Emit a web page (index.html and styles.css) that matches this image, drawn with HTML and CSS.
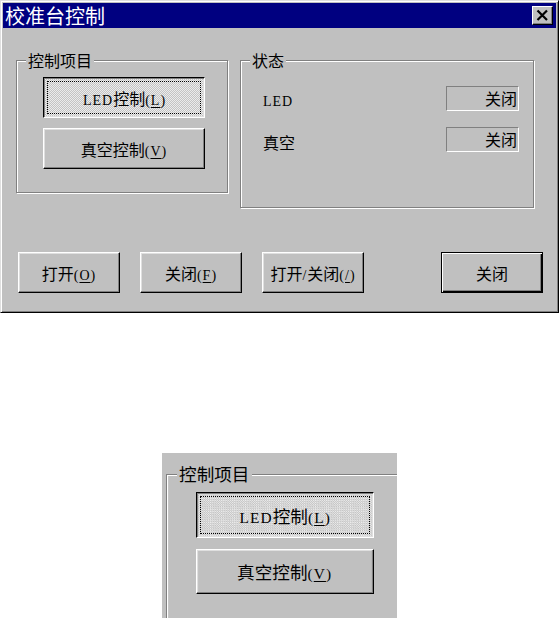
FILE: index.html
```html
<!DOCTYPE html>
<html lang="zh-CN">
<head>
<meta charset="utf-8">
<title>校准台控制</title>
<link rel="stylesheet" href="styles.css">
</head>
<body>
<div class="window">
  <div class="titlebar">
    <span class="title">校准台控制</span>
    <span class="close-btn"><svg width="21" height="19" viewBox="0 0 21 19"><path d="M5.5 4.5 L15 14 M15 4.5 L5.5 14" stroke="#000" stroke-width="2.2" fill="none"/></svg></span>
  </div>
  <div class="client">
    <div class="groups">
      <div class="group group-ctrl">
        <span class="legend">控制项目</span>
        <div class="btn btn-pressed"><span><span class="l">LED</span>控制<span class="l">(<u>L</u>)</span></span></div>
        <div class="btn btn-big"><span>真空控制<span class="l">(<u>V</u>)</span></span></div>
      </div>
      <div class="group group-state">
        <span class="legend">状态</span>
        <div class="state-row"><span class="l lbl">LED</span><span class="field">关闭</span></div>
        <div class="state-row"><span class="lbl">真空</span><span class="field">关闭</span></div>
      </div>
    </div>
    <div class="actions">
      <div class="btn btn-act"><span>打开<span class="l">(<u>O</u>)</span></span></div>
      <div class="btn btn-act"><span>关闭<span class="l">(<u>F</u>)</span></span></div>
      <div class="btn btn-act"><span>打开<span class="l">/</span>关闭<span class="l">(<u>/</u>)</span></span></div>
      <div class="btn btn-act btn-default"><span>关闭</span></div>
    </div>
  </div>
</div>

<div class="crop">
  <div class="crop-inner">
    <div class="group group-ctrl">
      <span class="legend">控制项目</span>
      <div class="btn btn-pressed"><span><span class="l">LED</span>控制<span class="l">(<u>L</u>)</span></span></div>
      <div class="btn btn-big"><span>真空控制<span class="l">(<u>V</u>)</span></span></div>
    </div>
  </div>
</div>
</body>
</html>
```
FILE: styles.css
```css
html, body {
  margin: 0;
  padding: 0;
  background: #ffffff;
}
body {
  font-family: "Noto Sans CJK SC", "Noto Sans", sans-serif;
  font-size: 16px;
  color: #000;
}
.l {
  font-family: "Liberation Serif", "DejaVu Serif", serif;
  font-size: 14px;
  letter-spacing: 1px;
}
u {
  text-decoration-thickness: 1px;
  text-underline-offset: 2px;
}
.window {
  box-sizing: border-box;
  width: 559px;
  height: 313px;
  border: 1px solid;
  border-color: #dfdfdf #000 #000 #dfdfdf;
  box-shadow: inset 1px 1px #fff, inset -1px -1px #808080;
  padding: 2px;
  background: #c0c0c0;
}
.titlebar {
  height: 25px;
  background: #000080;
  color: #fff;
  display: flex;
  align-items: center;
  justify-content: space-between;
  padding: 0 3px 0 2px;
}
.title {
  font-size: 20px;
  line-height: 25px;
}
.close-btn {
  display: block;
  width: 21px;
  height: 19px;
  box-sizing: border-box;
  background: #c0c0c0;
  border: 1px solid;
  border-color: #fff #000 #000 #fff;
  box-shadow: inset -1px -1px #808080;
}
.close-btn svg {
  display: block;
  margin: -1px;
}
.client {
  padding: 32px 0 0 13px;
}
.groups {
  display: flex;
  align-items: flex-start;
  gap: 12px;
}
.group {
  position: relative;
  box-sizing: border-box;
  border: 1px solid #808080;
  box-shadow: inset 1px 1px #fff, 1px 1px #fff;
}
.legend {
  position: absolute;
  top: -11px;
  left: 9px;
  padding: 0 2px;
  background: #c0c0c0;
  line-height: 20px;
  font-size: 16px;
}
.group-ctrl {
  width: 212px;
  height: 133px;
  padding: 16px 0 0 26px;
  display: flex;
  flex-direction: column;
  gap: 10px;
}
.group-state {
  width: 294px;
  height: 148px;
  padding: 25px 14px 0 22px;
  display: flex;
  flex-direction: column;
  gap: 16px;
}
.state-row {
  display: flex;
  align-items: center;
  justify-content: space-between;
  height: 25px;
}
.lbl {
  line-height: 25px;
  padding-top: 3px;
  margin-bottom: -3px;
}
.l.lbl {
  font-size: 14px;
}
.field {
  box-sizing: border-box;
  width: 73px;
  height: 25px;
  border: 1px solid;
  border-color: #808080 #fff #fff #808080;
  text-align: right;
  padding-right: 1px;
  line-height: 22px;
}
.btn {
  box-sizing: border-box;
  display: flex;
  align-items: center;
  justify-content: center;
  background: #c0c0c0;
  border: 1px solid;
  border-color: #fff #000 #000 #fff;
  box-shadow: inset -1px -1px #808080, inset 1px 1px #dfdfdf;
  white-space: nowrap;
}
.btn-big {
  width: 162px;
  height: 41px;
}
.btn-pressed {
  width: 162px;
  height: 41px;
  border-color: #000 #fff #fff #000;
  box-shadow: inset 1px 1px #808080, inset -1px -1px #dfdfdf;
  background: repeating-conic-gradient(#c4c4c4 0 25%, #ececec 0 50%) 0 0 / 2px 2px;
  outline: 1px dotted #000;
  outline-offset: -5px;
}
.btn-pressed > span {
  padding-top: 1px;
  padding-left: 1px;
}
.actions {
  display: flex;
  gap: 20px;
  margin-top: 44px;
  padding: 0 13px 0 2px;
}
.btn-act {
  width: 102px;
  height: 41px;
}
.btn-default {
  margin-left: auto;
  border: 1px solid #000;
  box-shadow: inset 1px 1px #fff, inset -1px -1px #000, inset -2px -2px #808080;
}
.crop {
  width: 235px;
  height: 165px;
  margin: 140px 0 0 162px;
  overflow: hidden;
  background: #c0c0c0;
}
.crop-inner {
  zoom: 1.1;
  padding: 19px 0 0 3.6px;
}
```
